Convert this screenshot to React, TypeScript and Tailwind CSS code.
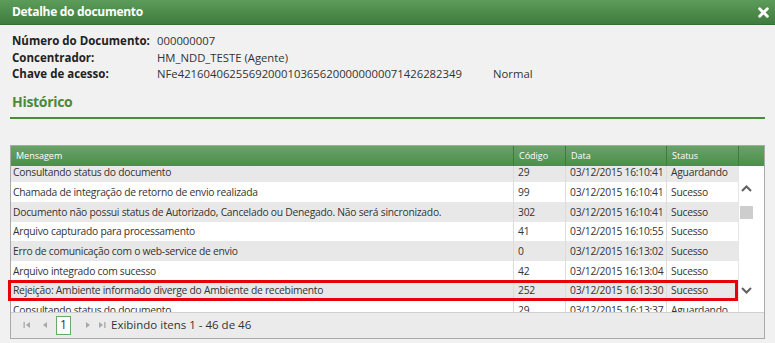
const rows = [
  { msg: "Consultando status do documento", code: "29", date: "03/12/2015 16:10:41", status: "Aguardando" },
  { msg: "Chamada de integração de retorno de envio realizada", code: "99", date: "03/12/2015 16:10:41", status: "Sucesso" },
  { msg: "Documento não possui status de Autorizado, Cancelado ou Denegado. Não será sincronizado.", code: "302", date: "03/12/2015 16:10:41", status: "Sucesso" },
  { msg: "Arquivo capturado para processamento", code: "41", date: "03/12/2015 16:10:55", status: "Sucesso" },
  { msg: "Erro de comunicação com o web-service de envio", code: "0", date: "03/12/2015 16:13:02", status: "Sucesso" },
  { msg: "Arquivo integrado com sucesso", code: "42", date: "03/12/2015 16:13:04", status: "Sucesso" },
  { msg: "Rejeição: Ambiente informado diverge do Ambiente de recebimento", code: "252", date: "03/12/2015 16:13:30", status: "Sucesso" },
  { msg: "Consultando status do documento", code: "29", date: "03/12/2015 16:13:37", status: "Aguardando" },
];

const cols = "grid grid-cols-[502px_52px_101px_72px]";

function PagerIcon({ dir, bar }: { dir: "l" | "r"; bar?: boolean }) {
  return (
    <svg width="8" height="8" viewBox="0 0 8 8" className="text-[#a8a8a8]">
      {dir === "l" ? (
        <>
          {bar && <rect x="0.5" y="1" width="1.3" height="6" fill="currentColor" />}
          <path d="M7 1 L3 4 L7 7 Z" fill="currentColor" />
        </>
      ) : (
        <>
          <path d="M1 1 L5 4 L1 7 Z" fill="currentColor" />
          {bar && <rect x="6.2" y="1" width="1.3" height="6" fill="currentColor" />}
        </>
      )}
    </svg>
  );
}

export default function App() {
  return (
    <div className="h-[343px] w-[775px] overflow-hidden bg-[#f1f1f1] font-['Open_Sans',sans-serif] text-[#333]">
      <div className="flex h-[25px] items-center justify-between border-b border-[#356b30] bg-gradient-to-b from-[#5c9c5a] to-[#3f7b3d] pl-[12px] pr-[6px]">
        <span className="text-[12px] font-bold tracking-[-0.3px] text-white">Detalhe do documento</span>
        <svg width="11" height="11" viewBox="0 0 10 10">
          <path d="M1.5 1.5 L8.5 8.5 M8.5 1.5 L1.5 8.5" stroke="white" strokeWidth="2.6" strokeLinecap="round" />
        </svg>
      </div>

      <div className="pl-[12px] pt-[8px] text-[11.3px] leading-[16.5px]">
        <div className="flex">
          <span className="w-[145px] text-[11.5px] font-bold text-[#222]">Número do Documento:</span>
          <span>000000007</span>
        </div>
        <div className="flex">
          <span className="w-[145px] text-[11.5px] font-bold text-[#222]">Concentrador:</span>
          <span>HM_NDD_TESTE (Agente)</span>
        </div>
        <div className="flex">
          <span className="w-[145px] text-[11.5px] font-bold text-[#222]">Chave de acesso:</span>
          <span className="w-[336px]">NFe42160406255692000103656200000000071426282349</span>
          <span>Normal</span>
        </div>
      </div>

      <div className="mx-[10px] mt-[9px] border-b-2 border-[#4d8a3c] pb-[6px] pl-[2px] text-[14px] font-bold leading-[19px] tracking-[-0.3px] text-[#4a8a3a]">
        Histórico
      </div>

      <div className="relative mx-[10px] mt-[26px] border border-[#a9a9a9] bg-white">
        <div className="flex h-[20px] bg-gradient-to-b from-[#66a466] to-[#4f8d4e] text-[9px] text-white">
          <div className={`${cols} w-[727px]`}>
            <div className="flex items-center pl-[5px]">Mensagem</div>
            <div className="flex items-center border-l border-[#3f7a3e] pl-[5px]">Código</div>
            <div className="flex items-center border-l border-[#3f7a3e] pl-[5px]">Data</div>
            <div className="flex items-center border-l border-[#3f7a3e] pl-[5px]">Status</div>
          </div>
          <div className="w-[15px] border-l border-[#3f7a3e]" />
        </div>

        <div className="flex h-[146px]">
          <div className="w-[727px] overflow-hidden">
            <div className="-mt-[3px]">
              {rows.map((r, i) => (
                <div
                  key={i}
                  className={`${cols} h-[19.7px] whitespace-nowrap text-[10.3px] tracking-[-0.25px] ${i % 2 === 0 ? "bg-[#e8e8e8]" : "bg-white"}`}
                >
                  <div className="flex items-center pl-[2px] pt-[1px]">{r.msg}</div>
                  <div className="flex items-center border-l border-[#dcdcdc] pl-[4px] pt-[1px]">{r.code}</div>
                  <div className="flex items-center border-l border-[#dcdcdc] pl-[4px] pt-[1px]">{r.date}</div>
                  <div className="flex items-center border-l border-[#dcdcdc] pl-[4px] pt-[1px]">{r.status}</div>
                </div>
              ))}
            </div>
          </div>
          <div className="flex w-[15px] flex-col items-center border-l border-[#e6e6e6] bg-white">
            <svg width="11" height="7" viewBox="0 0 11 7" className="mt-[19px]">
              <path d="M1 6 L5.5 1.5 L10 6" stroke="#606060" strokeWidth="2" fill="none" />
            </svg>
            <div className="mt-[14px] h-[13px] w-[13px] bg-[#cdcdcd]" />
            <svg width="11" height="7" viewBox="0 0 11 7" className="mt-[68px]">
              <path d="M1 1 L5.5 5.5 L10 1" stroke="#606060" strokeWidth="2" fill="none" />
            </svg>
          </div>
        </div>

        <div className="flex h-[26px] items-center border-t border-[#cfcfcf] bg-[#ebebeb] pl-[12px] text-[11.5px] text-[#333]">
          <PagerIcon dir="l" bar />
          <span className="ml-[9px]"><PagerIcon dir="l" /></span>
          <span className="ml-[8px] flex h-[19px] w-[15px] items-center justify-center border border-[#6aa86a] bg-white text-[12px]">1</span>
          <span className="ml-[14px]"><PagerIcon dir="r" /></span>
          <span className="ml-[5px]"><PagerIcon dir="r" bar /></span>
          <span className="ml-[5px]">Exibindo itens 1 - 46 de 46</span>
        </div>

        <div className="pointer-events-none absolute left-[-3px] top-[134px] h-[21px] w-[730px] border-[3px] border-[#e8000b]" />
      </div>
    </div>
  );
}
